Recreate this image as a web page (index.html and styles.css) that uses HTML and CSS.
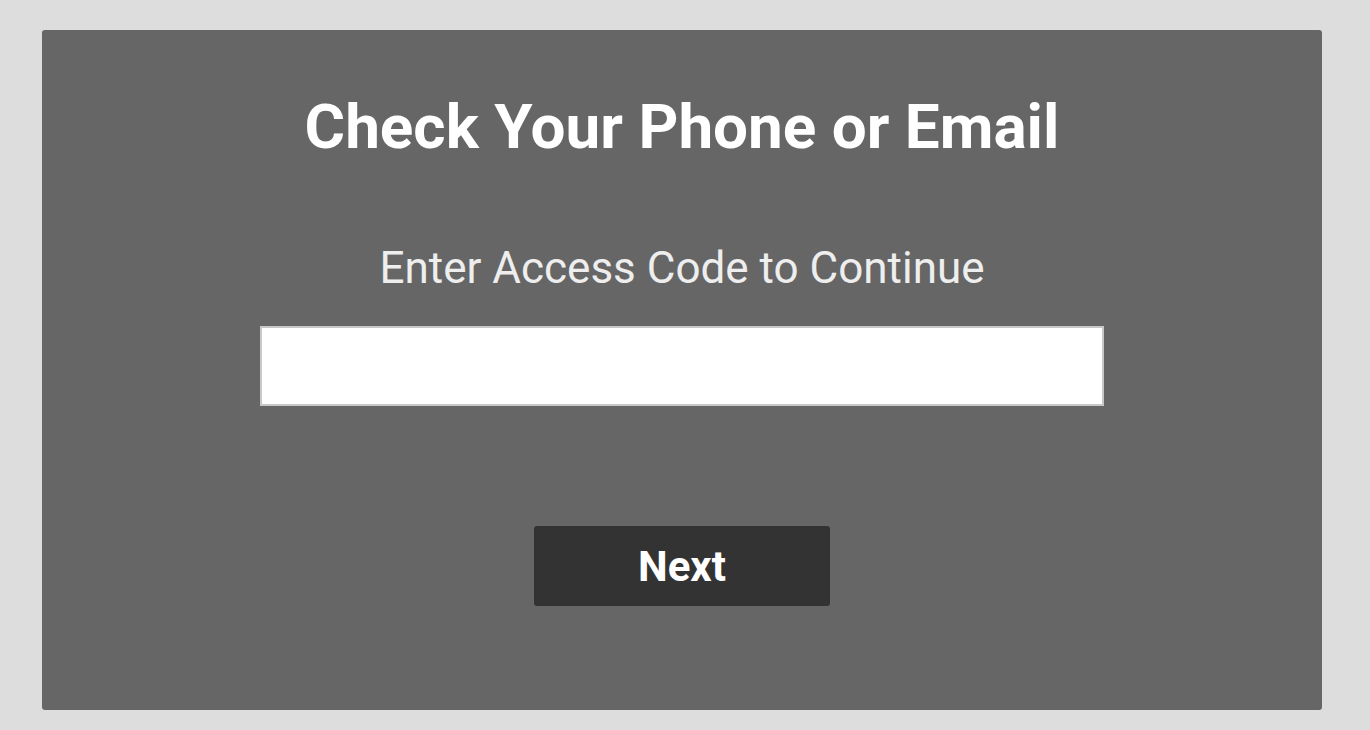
FILE: index.html
```html
<!DOCTYPE html>
<html>
  <head>
    <title>Access Code</title>
    <link rel="stylesheet" href="styles.css">
  </head>
  <body>
    <div class="code-container">
      <h1 class="code-title">Check Your Phone or Email</h1>
      <p class="code-label">Enter Access Code to Continue</p>
      <input type="text" id="accessCode" class="code-input" />
      <button class="next-btn">Next</button>
    </div>
  </body>
</html>
```

FILE: styles.css
```css
* {
  margin: 0;
  padding: 0;
  box-sizing: border-box;
}

body {
  font-family: Roboto, "Liberation Sans", sans-serif;
  background-color: #dddddd;
  padding: 30px 42px 20px;
}

.code-container {
  width: 1280px;
  height: 680px;
  background: #666666;
  border-radius: 3px;
  display: flex;
  flex-direction: column;
  align-items: center;
  padding-top: 57px;
}

.code-title {
  color: white;
  font-size: 62px;
  font-weight: 700;
  line-height: 80px;
}

.code-label {
  color: #eeeeee;
  font-size: 44px;
  font-weight: 400;
  line-height: 60px;
  margin-top: 71px;
}

.code-input {
  width: 844px;
  height: 80px;
  margin-top: 28px;
  border: 2px solid #c8c8c8;
  background: white;
  font-size: 24px;
  padding: 0 14px;
  outline: none;
}

.next-btn {
  width: 296px;
  height: 80px;
  margin-top: 120px;
  background: #333333;
  color: white;
  border: none;
  border-radius: 3px;
  font-family: inherit;
  font-size: 42px;
  font-weight: 700;
  cursor: pointer;
}
```
